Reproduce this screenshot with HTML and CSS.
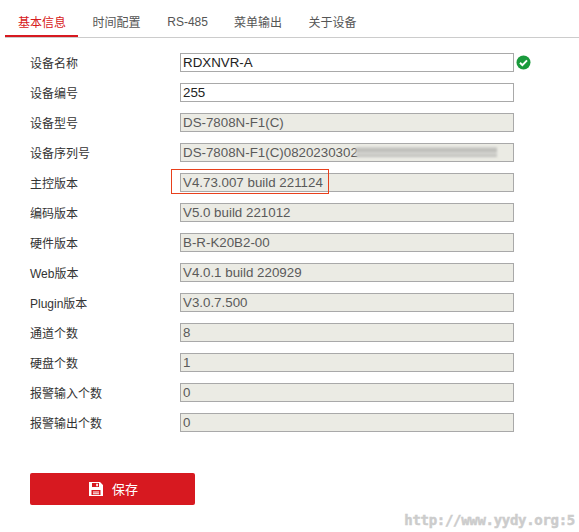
FILE: index.html
```html
<!DOCTYPE html>
<html lang="zh">
<head>
<meta charset="utf-8">
<title>基本信息</title>
<link rel="stylesheet" href="styles.css">
</head>
<body>
<nav class="tabs">
  <a class="tab active">基本信息</a>
  <a class="tab">时间配置</a>
  <a class="tab latin">RS-485</a>
  <a class="tab">菜单输出</a>
  <a class="tab">关于设备</a>
</nav>
<form class="form">
  <div class="row"><label>设备名称</label><div class="field">RDXNVR-A</div>
    <svg class="ok" width="15" height="15" viewBox="0 0 15 15"><circle cx="7.5" cy="7.5" r="7" fill="#1a9a3c"/><path d="M4 7.8l2.4 2.3L11 5.4" fill="none" stroke="#fff" stroke-width="2"/></svg>
  </div>
  <div class="row"><label>设备编号</label><div class="field">255</div></div>
  <div class="row"><label>设备型号</label><div class="field off">DS-7808N-F1(C)</div></div>
  <div class="row"><label>设备序列号</label><div class="field off serial">DS-7808N-F1(C)0820230302<span class="smear"></span></div></div>
  <div class="row"><label>主控版本</label><div class="field off">V4.73.007 build 221124</div><span class="mark"></span></div>
  <div class="row"><label>编码版本</label><div class="field off">V5.0 build 221012</div></div>
  <div class="row"><label>硬件版本</label><div class="field off">B-R-K20B2-00</div></div>
  <div class="row"><label>Web版本</label><div class="field off">V4.0.1 build 220929</div></div>
  <div class="row"><label>Plugin版本</label><div class="field off">V3.0.7.500</div></div>
  <div class="row"><label>通道个数</label><div class="field off">8</div></div>
  <div class="row"><label>硬盘个数</label><div class="field off">1</div></div>
  <div class="row"><label>报警输入个数</label><div class="field off">0</div></div>
  <div class="row"><label>报警输出个数</label><div class="field off">0</div></div>
  <button class="save" type="button">
    <svg width="14" height="14" viewBox="0 0 14 14"><path fill-rule="evenodd" d="M0 0h11l3 3v11H0zM3 1v4h7V1zM7.2 1.7h1.7v2.6H7.2zM2.5 8v5h9V8zM4 9.4h6v1H4zM4 11.2h6v1H4z" fill="#fff"/></svg>
    <span class="save-label">保存</span>
  </button>
</form>
<div class="watermark">http://www.yydy.org:5</div>
</body>
</html>
```
FILE: styles.css
```css
* { box-sizing: border-box; }
html, body { margin: 0; padding: 0; }
body {
  position: relative;
  width: 579px;
  height: 532px;
  overflow: hidden;
  background: #fff;
  font-family: "Liberation Sans", "Noto Sans CJK SC", sans-serif;
  font-size: 12px;
  color: #333;
}
.tabs {
  display: flex;
  gap: 26.6px;
  height: 38px;
  margin: 0 0 0 5px;
  padding: 15px 0 0 13px;
  border-bottom: 1px solid #ccc;
}
.tab {
  position: relative;
  font-size: 12px;
  line-height: 16px;
  color: #555;
}
.tab.latin { margin: -1px -0.5px 0 0; }
.tab.active { color: #d71920; }
.tab.active::after {
  content: "";
  position: absolute;
  left: -13px;
  right: -12px;
  top: 20px;
  height: 2px;
  background: #d71920;
}
.form {
  display: flex;
  flex-direction: column;
  gap: 11px;
  padding: 15px 0 0 30px;
}
.row {
  position: relative;
  display: flex;
  align-items: center;
  height: 19px;
}
.row label { width: 150px; color: #333; margin-top: -1px; }
.field {
  width: 334px;
  height: 19px;
  padding-left: 2px;
  border: 1px solid #a9a9a9;
  background: #fff;
  font-size: 13.33px;
  line-height: 18px;
  color: #222;
  white-space: nowrap;
}
.field.off { background: #ebebe4; color: #5a5a5a; }
.ok { margin-left: 2px; }
.serial { position: relative; overflow: hidden; }
.smear {
  position: absolute;
  left: 175px;
  top: 3px;
  width: 141px;
  height: 10px;
  background: linear-gradient(to bottom, #d4d4d0, #b8b8b4 35%, #d8d8d4 60%, #bcbcb8);
  filter: blur(1px);
}
.mark {
  position: absolute;
  left: 141px;
  top: -4px;
  width: 158px;
  height: 25px;
  border: 1px solid #e8401c;
}
.save {
  display: flex;
  align-items: center;
  justify-content: center;
  gap: 9px;
  width: 165px;
  height: 32px;
  margin-top: 30px;
  padding: 0 0 0 2px;
  border: 0;
  border-radius: 2px;
  background: #d71920;
  color: #fff;
  font: 13px "Liberation Sans", "Noto Sans CJK SC", sans-serif;
}
.save-label { margin-top: -2px; }
.watermark {
  position: absolute;
  right: 4px;
  bottom: 3px;
  font-family: "DejaVu Sans Mono", monospace;
  font-size: 14px;
  line-height: 18px;
  font-weight: bold;
  letter-spacing: -0.3px;
  color: #ccc;
  -webkit-text-stroke: 0.5px #ccc;
}
```
